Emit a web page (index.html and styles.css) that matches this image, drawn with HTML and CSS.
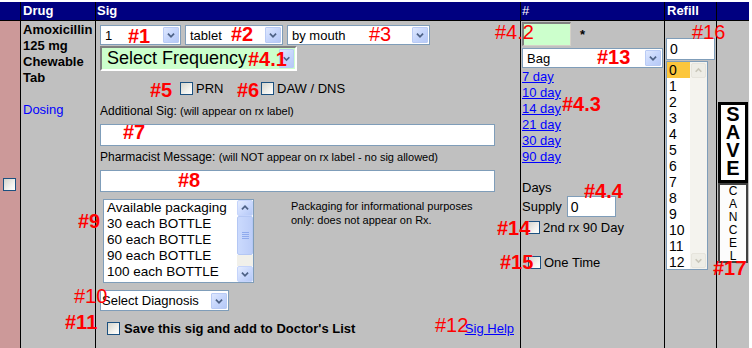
FILE: index.html
```html
<!DOCTYPE html>
<html>
<head>
<meta charset="utf-8">
<title>Sig</title>
<link rel="stylesheet" href="styles.css">
</head>
<body>
<div class="page">
  <div class="grid">
    <div class="h"></div>
    <div class="h hdrug">Drug</div>
    <div class="h hsig">Sig</div>
    <div class="h hnum">#</div>
    <div class="h hrefill">Refill</div>
    <div class="h hlast"></div>

    <div class="b pink"><span class="cb"></span></div>

    <div class="b drug">
      <div class="dname">Amoxicillin<br>125 mg<br>Chewable<br>Tab</div>
      <a class="dosing">Dosing</a>
    </div>

    <div class="b sig">
      <div class="row1">
        <div class="sel s-qty"><span class="sv">1</span><span class="dd"><svg viewBox="0 0 16 16"><path d="M4.5 6.5 8 10l3.5-3.5"/></svg></span></div>
        <div class="sel s-form"><span class="sv">tablet</span><span class="dd"><svg viewBox="0 0 16 16"><path d="M4.5 6.5 8 10l3.5-3.5"/></svg></span></div>
        <div class="sel s-route"><span class="sv">by mouth</span><span class="dd"><svg viewBox="0 0 16 16"><path d="M4.5 6.5 8 10l3.5-3.5"/></svg></span></div>
      </div>
      <div class="freq"><span class="fv">Select Frequency</span><span class="dd fdd"><svg viewBox="0 0 16 16"><path d="M4.5 6.5 8 10l3.5-3.5"/></svg></span></div>
      <div class="checks">
        <div class="grp g1"><span class="cb"></span><span>PRN</span></div>
        <div class="grp"><span class="cb"></span><span>DAW / DNS</span></div>
      </div>
      <div class="lbl l-add">Additional Sig: <small>(will appear on rx label)</small></div>
      <div class="txt"></div>
      <div class="lbl l-pharm">Pharmacist Message: <small>(will NOT appear on rx label - no sig allowed)</small></div>
      <div class="txt"></div>
      <div class="pack">
        <div class="lb">
          <div class="items">
            <div>Available packaging</div>
            <div>30 each BOTTLE</div>
            <div>60 each BOTTLE</div>
            <div>90 each BOTTLE</div>
            <div>100 each BOTTLE</div>
          </div>
          <div class="sb">
            <span class="sbtn"><svg viewBox="0 0 16 16"><path d="M4.5 9.5 8 6l3.5 3.5"/></svg></span>
            <span class="thumb"><i></i><i></i><i></i><i></i></span>
            <span class="track"></span>
            <span class="sbtn"><svg viewBox="0 0 16 16"><path d="M4.5 6.5 8 10l3.5-3.5"/></svg></span>
          </div>
        </div>
        <div class="note">Packaging for informational purposes<br>only: does not appear on Rx.</div>
      </div>
      <div class="sel s-diag"><span class="sv">Select Diagnosis</span><span class="dd"><svg viewBox="0 0 16 16"><path d="M4.5 6.5 8 10l3.5-3.5"/></svg></span></div>
      <div class="saverow">
        <div class="grp"><span class="cb"></span><b>Save this sig and add to Doctor's List</b></div>
        <a class="link">Sig Help</a>
      </div>
    </div>

    <div class="b num">
      <div class="qtyrow"><div class="green"></div><span class="star">*</span></div>
      <div class="sel s-bag"><span class="sv">Bag</span><span class="dd"><svg viewBox="0 0 16 16"><path d="M4.5 6.5 8 10l3.5-3.5"/></svg></span></div>
      <div class="days">
        <a class="link">7 day</a>
        <a class="link">10 day</a>
        <a class="link">14 day</a>
        <a class="link">21 day</a>
        <a class="link">30 day</a>
        <a class="link">90 day</a>
      </div>
      <div class="dlabel">Days</div>
      <div class="supply"><span>Supply</span><div class="inp sup">0</div></div>
      <div class="grp r14"><span class="cb"></span><span>2nd rx 90 Day</span></div>
      <div class="grp r15"><span class="cb"></span><span>One Time</span></div>
    </div>

    <div class="b refill">
      <div class="inp rin">0</div>
      <div class="rlb">
        <div class="ritems">
          <div class="selitem">0</div><div>1</div><div>2</div><div>3</div><div>4</div><div>5</div><div>6</div><div>7</div><div>8</div><div>9</div><div>10</div><div>11</div><div>12</div>
        </div>
        <div class="rsb">
          <span class="dbtn"><svg viewBox="0 0 16 16"><path d="M4.5 9.5 8 6l3.5 3.5"/></svg></span>
          <span class="dtrack"></span>
          <span class="dbtn"><svg viewBox="0 0 16 16"><path d="M4.5 6.5 8 10l3.5-3.5"/></svg></span>
        </div>
      </div>
    </div>

    <div class="b last">
      <div class="save">S<br>A<br>V<br>E</div>
      <div class="cancel">C<br>A<br>N<br>C<br>E<br>L</div>
    </div>
  </div>

  <div class="tag t1">#1</div>
  <div class="tag t2">#2</div>
  <div class="tag t3 thin">#3</div>
  <div class="tag t41">#4.1</div>
  <div class="tag t42 thin">#4.2</div>
  <div class="tag t13">#13</div>
  <div class="tag t43">#4.3</div>
  <div class="tag t16 thin">#16</div>
  <div class="tag t5">#5</div>
  <div class="tag t6">#6</div>
  <div class="tag t7">#7</div>
  <div class="tag t8">#8</div>
  <div class="tag t9">#9</div>
  <div class="tag t44">#4.4</div>
  <div class="tag t14">#14</div>
  <div class="tag t15">#15</div>
  <div class="tag t17">#17</div>
  <div class="tag t10 thin">#10</div>
  <div class="tag t11">#11</div>
  <div class="tag t12 thin">#12</div>
</div>
</body>
</html>
```
FILE: styles.css
```css
* { box-sizing: border-box; }
html, body { margin: 0; padding: 0; background: #fff; }
body { font-family: "Liberation Sans", Arial, sans-serif; font-size: 13px; color: #000; }
.page { position: relative; width: 752px; height: 348px; overflow: hidden; padding-top: 2px; }

.grid {
  display: grid;
  grid-template-columns: 21px 75px 425px 144px 52px 32px;
  grid-template-rows: 19px 340px;
  width: 749px;
}
.grid > div { border-right: 1px solid #000; }
.grid > div:nth-child(6), .grid > div:nth-child(12) { border-right: none; }

.h {
  background: #000080;
  color: #fff;
  font-weight: bold;
  font-size: 13px;
  line-height: 18px;
  border-bottom: 1px solid #000;
}
.hdrug { padding-left: 2px; }
.hsig { padding-left: 1px; }
.hnum { padding-left: 1px; font-weight: normal; }
.hrefill { padding-left: 2px; }

.b { background: #c0c0c0; }
.pink { background: #cc9999; padding: 157px 0 0 3px; }

/* checkbox */
.cb {
  display: inline-block;
  flex: none;
  width: 13px;
  height: 13px;
  border: 1px solid #1c5180;
  background: linear-gradient(135deg, #d4d4cc 0%, #f4f4f0 65%, #ffffff 100%);
}

/* drug column */
.drug { padding: 1px 0 0 2px; }
.dname { font-weight: bold; line-height: 16px; }
.dosing { display: block; margin-top: 16px; color: #0000ff; line-height: 16px; }

/* selects */
.sel {
  display: flex;
  align-items: center;
  height: 20px;
  border: 1px solid #7f9db9;
  background: #fff;
}
.sv { flex: 1; padding-left: 4px; white-space: nowrap; overflow: hidden; }
.dd {
  flex: none;
  width: 16px;
  height: 16px;
  margin-right: 1px;
  border: 1px solid #b9cbf5;
  border-radius: 1px;
  background: linear-gradient(135deg, #dfe8fe 0%, #c6d6fc 50%, #b6c9f7 100%);
}
.dd svg, .sbtn svg, .dbtn svg { display: block; width: 100%; height: 100%; }
.dd path, .sbtn path { fill: none; stroke: #4d6185; stroke-width: 2; }

.sig { padding: 4px 6px 0 4px; }
.row1 { display: flex; }
.s-qty { width: 81px; }
.s-form { width: 98px; margin-left: 4px; }
.s-route { width: 143px; margin-left: 4px; }

.freq {
  display: flex;
  align-items: center;
  width: 197px;
  height: 25px;
  margin-top: 1px;
  border-top: 2px solid #808080;
  border-left: 2px solid #808080;
  border-bottom: 2px solid #fff;
  border-right: 2px solid #fff;
  background: #ccffcc;
}
.fv { flex: 1; padding-left: 5px; font-size: 18px; white-space: nowrap; }
.fdd { height: 19px; width: 15px; margin-right: 1px; }

.checks { display: flex; align-items: center; height: 17px; margin-top: 9px; padding-left: 80px; }
.grp { display: flex; align-items: center; gap: 3px; }
.g1 { width: 81px; }

.lbl { font-size: 12px; line-height: 15px; white-space: nowrap; }
.lbl small { font-size: 11px; }
.l-add { margin-top: 7px; }
.l-pharm { margin-top: 4px; }
.txt { width: 395px; height: 22px; margin-top: 5px; border: 1px solid #7f9db9; background: #fff; }

.pack { display: flex; align-items: flex-start; margin-top: 7px; padding-left: 3px; }
.lb { display: flex; width: 151px; height: 84px; border: 1px solid #7f9db9; background: #fff; }
.items { flex: 1; padding: 0 0 0 3px; font-size: 13.5px; line-height: 16px; white-space: nowrap; overflow: hidden; }
.sb { display: flex; flex-direction: column; width: 16px; }
.sbtn {
  display: block;
  height: 16px;
  border: 1px solid #c5d4fb;
  border-radius: 2px;
  background: linear-gradient(135deg, #e4ecfe 0%, #c9d8fd 55%, #b5c8f6 100%);
}
.thumb {
  display: flex;
  flex-direction: column;
  justify-content: center;
  align-items: center;
  gap: 1px;
  height: 39px;
  border: 1px solid #b4c7f4;
  border-radius: 2px;
  background: linear-gradient(90deg, #cbdafd, #bccdf8);
}
.thumb i { display: block; width: 7px; height: 1px; background: #eef3fe; border-bottom: 1px solid #8faaed; }
.track { flex: 1; background: #f1f0ea; }
.note { margin-left: 37px; font-size: 11px; line-height: 14px; white-space: nowrap; }

.s-diag { width: 129px; height: 21px; margin-top: 7px; }
.s-diag .sv { padding-left: 1px; }

.saverow { display: flex; justify-content: space-between; align-items: center; height: 17px; margin-top: 9px; padding-left: 7px; }
.saverow .grp { gap: 4px; }
.link { color: #0000ff; text-decoration: underline; white-space: nowrap; }

/* # column */
.num { padding: 1px 0 0 1px; }
.qtyrow { display: flex; align-items: flex-start; }
.green {
  width: 49px;
  height: 24px;
  border-top: 2px solid #808080;
  border-left: 2px solid #808080;
  border-bottom: 1px solid #d4d0c8;
  border-right: 1px solid #d4d0c8;
  background: #ccffcc;
}
.star { margin-left: 9px; padding-top: 6px; font-weight: bold; line-height: 13px; }
.s-bag { width: 141px; margin-top: 2px; }
.days { margin-top: 1px; }
.days .link { display: block; line-height: 16px; }
.dlabel { margin-top: 15px; line-height: 16px; }
.supply { display: flex; align-items: center; gap: 5px; }
.inp { border: 1px solid #7f9db9; background: #fff; padding-left: 3px; font-size: 14px; display: flex; align-items: center; }
.sup { width: 49px; height: 21px; }
.r14 { margin-top: 2px; height: 17px; padding-left: 5px; }
.r15 { margin-top: 18px; height: 17px; padding-left: 6px; }

/* refill column */
.refill { padding: 17px 0 0 1px; }
.rin { width: 49px; height: 22px; }
.rlb { display: flex; width: 42px; height: 209px; margin-top: 1px; border: 1px solid #7f9db9; background: #fff; }
.ritems { flex: 1; font-size: 14px; line-height: 16px; }
.ritems div { padding-left: 2px; }
.ritems .selitem { background: #fcc63c; }
.rsb { display: flex; flex-direction: column; width: 17px; background: #f4f3ee; }
.dbtn { display: block; height: 15px; margin: 1px 1px 0; border: 1px solid #e6e4dc; border-radius: 2px; background: #eeede6; }
.dbtn path { fill: none; stroke: #c9c7ba; stroke-width: 2; }
.dtrack { flex: 1; }
.rsb .dbtn:last-child { margin: 0 1px 1px; }

/* last column */
.last { padding: 81px 0 0 1px; }
.save {
  width: 30px;
  height: 81px;
  border: 3px solid #000;
  background: #fff;
  text-align: center;
  font-weight: bold;
  font-size: 20px;
  line-height: 18px;
}
.cancel {
  width: 30px;
  height: 80px;
  border: 2px solid #404040;
  background: #fcfcfc;
  text-align: center;
  font-size: 12px;
  line-height: 13px;
}

/* red annotation tags */
.tag { position: absolute; color: #ff0000; font-weight: bold; font-size: 20px; line-height: 20px; white-space: nowrap; }
.tag.thin { font-weight: normal; }
.t1 { left: 128px; top: 26px; }
.t2 { left: 231px; top: 24px; }
.t3 { left: 369px; top: 24px; }
.t41 { left: 248px; top: 49px; }
.t42 { left: 495px; top: 22px; }
.t13 { left: 597px; top: 47px; }
.t43 { left: 562px; top: 94px; }
.t16 { left: 692px; top: 22px; }
.t5 { left: 150px; top: 80px; }
.t6 { left: 237px; top: 80px; }
.t7 { left: 123px; top: 122px; }
.t8 { left: 178px; top: 170px; }
.t9 { left: 78px; top: 211px; }
.t44 { left: 584px; top: 181px; }
.t14 { left: 497px; top: 218px; }
.t15 { left: 500px; top: 252px; }
.t17 { left: 713px; top: 258px; }
.t10 { left: 74px; top: 286px; }
.t11 { left: 65px; top: 312px; }
.t12 { left: 435px; top: 315px; }
```
